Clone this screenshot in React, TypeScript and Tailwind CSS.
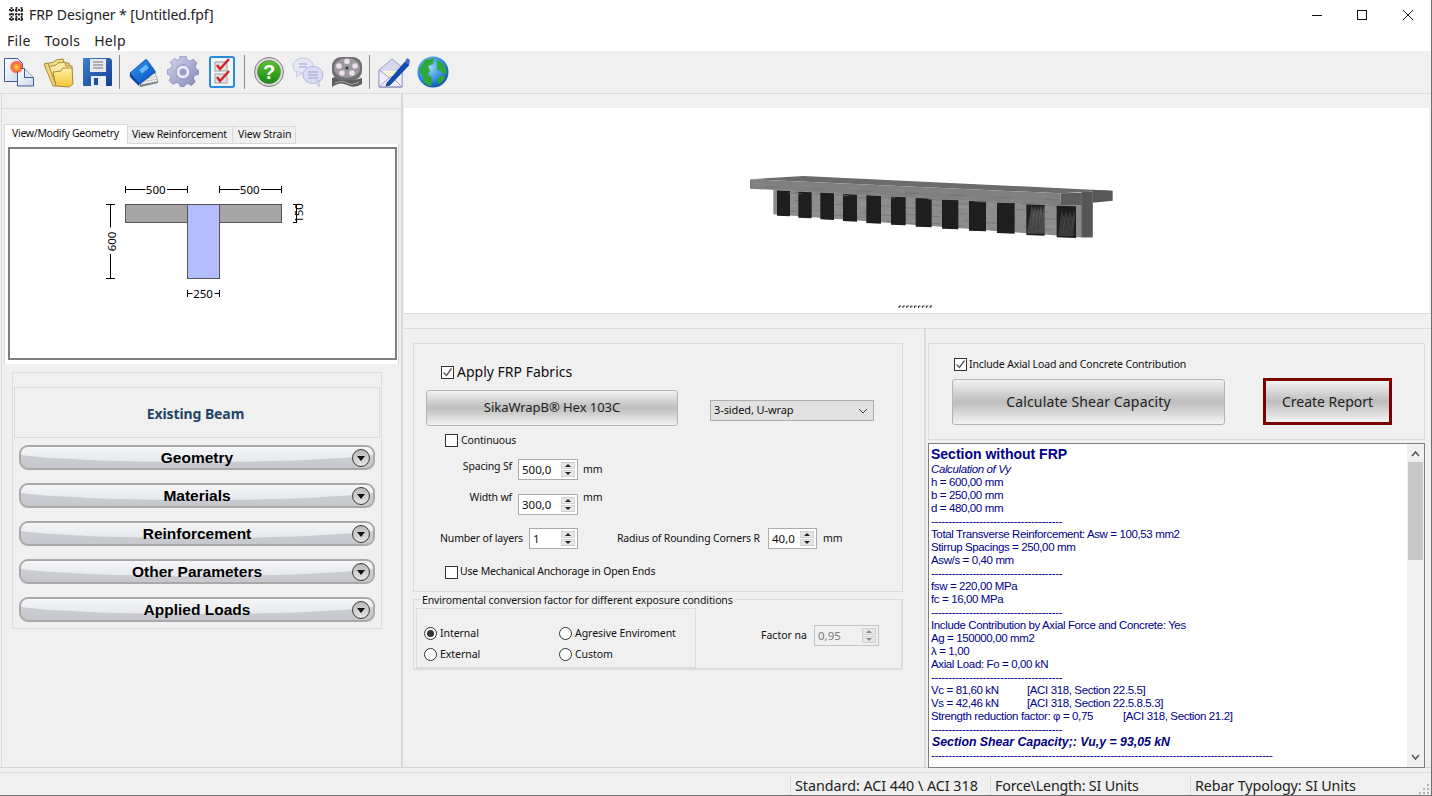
import React from 'react';

/* ── Toolbar icons ───────────────────────────────────────────────── */

function NewIcon() {
    return (
        <svg width="32" height="32" viewBox="0 0 32 32">
            <defs>
                <linearGradient id="pg" x1="0" y1="0" x2="1" y2="1">
                    <stop offset="0" stopColor="#ffffff" />
                    <stop offset="1" stopColor="#c9d8ee" />
                </linearGradient>
                <radialGradient id="burst">
                    <stop offset="0" stopColor="#ffe96a" />
                    <stop offset="0.45" stopColor="#ff8a1e" />
                    <stop offset="0.75" stopColor="#f43a2a" stopOpacity="0.75" />
                    <stop offset="1" stopColor="#ff3a2a" stopOpacity="0" />
                </radialGradient>
            </defs>
            <path d="M0.500 2.500h13l5 5v18H0.500z" fill="url(#pg)" stroke="#3e5c94" strokeWidth="1" />
            <path d="M13.500 12.500h7l9 9v8.500H13.500z" fill="url(#pg)" stroke="#3e5c94" strokeWidth="1" />
            <path d="M20.500 12.500v9h9" fill="#dfe8f6" stroke="#3e5c94" strokeWidth="1" />
            <circle cx="12.500" cy="11" r="7" fill="url(#burst)" />
        </svg>
    );
}

function FolderIcon() {
    return (
        <svg width="32" height="32" viewBox="0 0 32 32">
            <defs>
                <linearGradient id="fg" x1="0" y1="0" x2="0" y2="1">
                    <stop offset="0" stopColor="#fff3a8" />
                    <stop offset="1" stopColor="#f4c430" />
                </linearGradient>
            </defs>
            <path d="M2 8l9-2 2-2 7-1 1 4 5 0 1 6-20 4z" fill="#f3dc8a" stroke="#a8863a" strokeWidth="1" />
            <path d="M4 11l9-2 2-2 7-1 1 4 6 0v6l-22 5z" fill="#fbe9a6" stroke="#a8863a" strokeWidth="1" />
            <path d="M10 16l8-1 2-3 9 0 1 16-4 3-13-1z" fill="url(#fg)" stroke="#a8863a" strokeWidth="1" />
            <path d="M1 8l9 22 3 0-8-23z" fill="#f5d978" stroke="#a8863a" strokeWidth="1" />
        </svg>
    );
}

function SaveIcon() {
    return (
        <svg width="32" height="32" viewBox="0 0 32 32">
            <defs>
                <linearGradient id="sg" x1="0" y1="0" x2="1" y2="1">
                    <stop offset="0" stopColor="#3f7fd2" />
                    <stop offset="1" stopColor="#123f8c" />
                </linearGradient>
            </defs>
            <path d="M1 3q0-1 1-1h26l2 2v25q0 1-1 1H2q-1 0-1-1z" fill="url(#sg)" />
            <rect x="8" y="3" width="16" height="13" fill="#e9e9ec" />
            <path d="M11 6h10M11 9h10M11 12h10" stroke="#9a9aa4" strokeWidth="1.400" />
            <rect x="9" y="20" width="15" height="10" fill="#e8eef7" />
            <rect x="12" y="22" width="4" height="7" fill="#1d4f9f" />
        </svg>
    );
}

function BookIcon() {
    return (
        <svg width="32" height="32" viewBox="0 0 32 32">
            <defs>
                <linearGradient id="bg" x1="0" y1="0" x2="1" y2="1">
                    <stop offset="0" stopColor="#2f97f2" />
                    <stop offset="1" stopColor="#0a4cba" />
                </linearGradient>
            </defs>
            <path d="M12 31L30 27 30 24 12 28z" fill="#6f7a8a" />
            <path d="M12 29L30 25.500 27 17 14 22z" fill="#f0f0ea" stroke="#8e8e8e" strokeWidth="0.700" />
            <path d="M14 24L29 20M13 26L30 23" stroke="#b5b5ae" strokeWidth="0.800" />
            <path d="M2 17q-1 3 1 5l9 9q-2-2 0-3z" fill="#0a3f9c" />
            <path d="M2 17L17 4q1-1 2 0l8 11q1 2-1 2L12 28z" fill="url(#bg)" stroke="#0a3f9c" strokeWidth="0.700" />
            <path d="M11 14l7-5.500 3 3.500-7 5.500z" fill="#66b8f8" />
        </svg>
    );
}

function GearIcon() {
    return (
        <svg width="32" height="32" viewBox="0 0 32 32">
            <defs>
                <linearGradient id="gg" x1="0" y1="0" x2="1" y2="1">
                    <stop offset="0" stopColor="#d6d8f0" />
                    <stop offset="1" stopColor="#8487b8" />
                </linearGradient>
            </defs>
            <path
                d="M13 1h6l1 4 3 1.300 3.500-2 4 4-2 3.500L30 15l2 1v4l-4 1-1.300 3 2 3.500-4 4-3.500-2-3 1.200-1 1.800h-4l-1-3-3-1.200-3.500 2-4-4 2-3.500L2.800 21 0 20v-5l3.500-1L5 11 3 7.500l4-4 3.500 2 2-.9z"
                fill="url(#gg)"
                stroke="#7b7eae"
                strokeWidth="0.700"
                transform="translate(0.500 -1) scale(0.97)"
            />
            <circle cx="16" cy="16" r="7" fill="#e8e9f6" stroke="#8d90bd" />
            <circle cx="16" cy="16" r="3.500" fill="#9a9dc8" />
        </svg>
    );
}

function ChecklistIcon() {
    return (
        <svg width="32" height="32" viewBox="0 0 32 32">
            <rect x="4" y="1" width="24" height="30" rx="2" fill="#f2f4f7" stroke="#2a8bdc" strokeWidth="2" />
            <rect x="9" y="6" width="12" height="9" fill="#e3e3e3" stroke="#8e8e8e" strokeWidth="0.800" />
            <rect x="9" y="18" width="12" height="9" fill="#e3e3e3" stroke="#8e8e8e" strokeWidth="0.800" />
            <path d="M11 9l3 4 9-10" fill="none" stroke="#d3222a" strokeWidth="2.400" />
            <path d="M11 21l3 4 9-10" fill="none" stroke="#d3222a" strokeWidth="2.400" />
        </svg>
    );
}

function HelpIcon() {
    return (
        <svg width="32" height="32" viewBox="0 0 32 32">
            <defs>
                <linearGradient id="hg" x1="0" y1="0" x2="0" y2="1">
                    <stop offset="0" stopColor="#5cc22c" />
                    <stop offset="1" stopColor="#168d12" />
                </linearGradient>
            </defs>
            <circle cx="16" cy="16" r="14.500" fill="#dcdcdc" stroke="#7d7d7d" />
            <circle cx="16" cy="16" r="11.500" fill="url(#hg)" stroke="#4c6d42" strokeWidth="0.600" />
            <text x="16" y="23" textAnchor="middle" fontFamily="'Liberation Sans', sans-serif" fontWeight="700" fontSize="20" fill="#ffffff">
                ?
            </text>
        </svg>
    );
}

function ChatIcon() {
    return (
        <svg width="32" height="32" viewBox="0 0 32 32">
            <ellipse cx="11" cy="10" rx="10" ry="8" fill="#e6e8f8" stroke="#c4c8e6" />
            <path d="M5 15l-1 6 6-4z" fill="#e6e8f8" stroke="#c4c8e6" strokeWidth="0.800" />
            <ellipse cx="21" cy="19" rx="10" ry="8.500" fill="#d9dcf4" stroke="#b3b8de" />
            <path d="M24 26l3 5 0-7z" fill="#d9dcf4" stroke="#b3b8de" strokeWidth="0.800" />
            <path d="M7 8h8M7 11h8M16 16h10M16 19h10M16 22h10" stroke="#9a9fc4" strokeWidth="1" />
        </svg>
    );
}

function FilmIcon() {
    return (
        <svg width="32" height="32" viewBox="0 0 32 32">
            <path d="M1 22q8-3 14 0t16 0l0 6q-8 5-15 1T1 31z" fill="#5d5f5c" />
            <path d="M4 27q8-3 12 0t12-1" fill="none" stroke="#a6a8a2" strokeWidth="1" />
            <rect x="1" y="1" width="30" height="23" rx="9" fill="#6f6f73" />
            <ellipse cx="16" cy="12" rx="13" ry="10" fill="#9a9aa0" />
            <circle cx="16" cy="5.500" r="2.800" fill="#ecdfe8" />
            <circle cx="8" cy="10" r="2.800" fill="#ecdfe8" />
            <circle cx="24" cy="10" r="2.800" fill="#ecdfe8" />
            <circle cx="11" cy="17" r="2.800" fill="#ecdfe8" />
            <circle cx="21" cy="17" r="2.800" fill="#ecdfe8" />
            <circle cx="16" cy="12" r="1.500" fill="#35353a" />
        </svg>
    );
}

function MailIcon() {
    return (
        <svg width="32" height="32" viewBox="0 0 32 32">
            <path d="M1 14L14 3l10 8v20H1z" fill="#d6d8f0" stroke="#8d90c0" strokeWidth="0.800" />
            <path d="M5 15h16v8L13 25 5 20z" fill="#fbf4d8" />
            <path d="M1 31l12-11 11 11zM1 14l12 9 11-9v17H1z" fill="#eeeffa" stroke="#8d90c0" strokeWidth="0.800" />
            <path d="M9 27L27 6l4 3-19 20-4 1z" fill="#0d4fbd" stroke="#07296a" strokeWidth="0.700" />
            <path d="M27 6l2-4 3 2-1 5z" fill="#3a6fd0" />
        </svg>
    );
}

function GlobeIcon() {
    return (
        <svg width="32" height="32" viewBox="0 0 32 32">
            <defs>
                <radialGradient id="eg" cx="0.4" cy="0.35" r="0.75">
                    <stop offset="0" stopColor="#9ad6fb" />
                    <stop offset="0.6" stopColor="#2f88de" />
                    <stop offset="1" stopColor="#0b3f98" />
                </radialGradient>
            </defs>
            <circle cx="16" cy="16" r="15.500" fill="url(#eg)" />
            <path d="M2 13l6-9 9-2-1 6-5 2 2 5-2 3 4 4-1 8q-4 0-7-4l-1-6-3-3z" fill="#2fa83a" />
            <path d="M20 4l7 4 3 9-4 1-2-3-4-1zM21 22l6-3 1 3-5 6-3-2z" fill="#2fa83a" />
        </svg>
    );
}

/* ── Form bits ───────────────────────────────────────────────────── */

function Check({ checked, className }: { checked?: boolean; className?: string }) {
    return (
        <span className={`block w-[13px] h-[13px] shrink-0 bg-white border border-[#333333] ${className ?? ''}`}>
            {checked && (
                <svg width="11" height="11" viewBox="0 0 11 11" className="block">
                    <path d="M1.500 5.500l3 3 5-7" fill="none" stroke="#555555" strokeWidth="1.300" />
                </svg>
            )}
        </span>
    );
}

function Radio({ checked, label, className }: { checked?: boolean; label: string; className?: string }) {
    return (
        <div className={`flex items-center gap-[3px] h-[13px] ${className ?? ''}`}>
            <span className="flex items-center justify-center w-[13px] h-[13px] rounded-full bg-white border border-[#333333]">
                {checked && <span className="block w-[7px] h-[7px] rounded-full bg-[#333333]" />}
            </span>
            <span className="text-[10.500px] text-[#111111] tracking-[-0.05px]">{label}</span>
        </div>
    );
}

function Spin({ value, width, disabled }: { value: string; width: string; disabled?: boolean }) {
    return (
        <div className={`flex h-[21px] shrink-0 p-[2px] border ${width} ${disabled ? 'bg-[#f0f0f0] border-[#c4c4c4]' : 'bg-white border-[#ababab]'}`}>
            <span className={`flex-1 pl-[1px] text-[11.500px] leading-[15px] tracking-[0px] ${disabled ? 'text-[#7d7d7d]' : 'text-[#111111]'}`}>{value}</span>
            <div className="flex flex-col gap-px w-[14px]">
                <span className="flex-1 flex items-center justify-center bg-[#e6e6e6] border border-[#d2d2d2]">
                    <span className={`w-0 h-0 border-x-[3px] border-x-transparent border-b-[3px] ${disabled ? 'border-b-[#8c8c8c]' : 'border-b-[#222222]'}`} />
                </span>
                <span className="flex-1 flex items-center justify-center bg-[#e6e6e6] border border-[#d2d2d2]">
                    <span className={`w-0 h-0 border-x-[3px] border-x-transparent border-t-[3px] ${disabled ? 'border-t-[#8c8c8c]' : 'border-t-[#222222]'}`} />
                </span>
            </div>
        </div>
    );
}

function AccordionBar({ label }: { label: string }) {
    return (
        <div className="relative h-[25px] mx-[6px] rounded-[9px] border-[2px] border-[#a9a9a9] overflow-hidden bg-linear-to-b from-[#cfd1d6] to-[#c6c8cd]">
            <div className="absolute -left-[20px] -right-[20px] -top-[10px] h-[25px] rounded-b-[50%] bg-linear-to-b from-[#ffffff] to-[#e6e8ec]" />
            <div className="relative flex items-center justify-center h-full font-['Liberation_Sans',sans-serif] font-bold text-[15.500px] text-black">
                {label}
            </div>
            <div className="absolute right-[3px] top-[2px] flex items-center justify-center w-[18px] h-[18px] rounded-full border border-[#3b3b3b] bg-linear-to-b from-[#b9b9b9] to-[#e4e4e4]">
                <span className="w-0 h-0 border-x-[4px] border-x-transparent border-t-[5px] border-t-[#111111]" />
            </div>
        </div>
    );
}

/* ── Drawings ────────────────────────────────────────────────────── */

function TSection() {
    return (
        <svg width="385" height="208" viewBox="10 149 385 208" className="block" fontFamily="'Noto Sans', sans-serif" fontSize="11.500">
            <rect x="125.500" y="204.500" width="156" height="18" fill="#a6a6a6" stroke="#555555" />
            <rect x="187.500" y="204.500" width="32" height="74" fill="#b3bcff" stroke="#555555" />
            <g stroke="#000000" strokeWidth="1">
                <path d="M125.500 186v7M125.500 189.500h20M167 189.500h20.500M187.500 186v7" />
                <path d="M219.500 186v7M219.500 189.500h20M261 189.500h20.500M281.500 186v7" />
                <path d="M106 204.500h9M110.500 204.500v23M110.500 254v24M106 278.500h9" />
                <path d="M187.500 290v7M187.500 293.500h5M214.500 293.500h5M219.500 290v7" />
                <path d="M293 204.500h9M293 222.500h4M296.500 204v19" />
            </g>
            <text x="155.700" y="194" textAnchor="middle">500</text>
            <text x="249.700" y="194" textAnchor="middle">500</text>
            <text x="203" y="298" textAnchor="middle">250</text>
            <text transform="translate(116 241.500) rotate(-90)" textAnchor="middle">600</text>
            <text transform="translate(303 213) rotate(-90)" textAnchor="middle">150</text>
        </svg>
    );
}

const BARS = [
    [231, 270, 121, 197],
    [295, 335, 125, 203],
    [361, 402, 128, 208],
    [429, 471, 132, 213],
    [499, 543, 136, 219],
    [573, 617, 140, 224],
    [647, 695, 144, 230],
    [726, 775, 149, 236],
    [807, 858, 153, 242],
    [891, 944, 158, 249],
    [979, 1034, 163, 255],
    [1070, 1128, 167, 262],
];

function BeamView() {
    const grain = Array.from({ length: 70 }, (_, i) => {
        const x = 225 + ((i * 137) % 900);
        const t = (x - 220) / 925;
        const top = 122 + t * 42;
        const h = 72 + t * 24;
        const y = top + ((i * 29) % 100) / 100 * h;
        return <path key={i} d={`M${x} ${y}l${24 + (i % 5) * 7} ${2}`} stroke={i % 3 ? '#6e6e6e' : '#a2a2a2'} strokeWidth="2" />;
    });
    const flangeGrain = Array.from({ length: 26 }, (_, i) => {
        const x = 160 + i * 35;
        const y = 100 + (i % 4) * 8 + (x - 150) * 0.045;
        return <path key={i} d={`M${x} ${y}l${40} ${2}`} stroke={i % 2 ? '#6d6d6d' : '#8e8e8e'} strokeWidth="2" />;
    });
    const hatch = Array.from({ length: 18 }, (_, i) => (
        <path key={i} d={`M${982 + i * 3} ${250 + (i % 3)}L${996 + i * 2.200} ${170 + (i % 4) * 5}`} stroke="#8a8a8a" strokeWidth="1.200" />
    ));
    const hatch2 = Array.from({ length: 14 }, (_, i) => (
        <path key={i} d={`M${1076 + i * 3.200} ${258}L${1086 + i * 3} ${185 + (i % 4) * 6}`} stroke="#707070" strokeWidth="1.200" />
    ));
    return (
        <svg width="1025" height="205" viewBox="404 108 1025 205" className="block">
            <g transform="translate(700 150) scale(0.33333)">
                <polygon points="220,119 1145,160 1145,262 220,193" fill="#8c8c8c" />
                {grain}
                {BARS.map(([a, b, t, v], i) => (
                    <polygon key={i} points={`${a},${t} ${b},${t + 2} ${b},${v + 2} ${a},${v}`} fill="#1e1e1e" />
                ))}
                {hatch}
                {hatch2}
                <polygon points="1128,130 1178,126 1178,262 1128,262" fill="#8a8a8a" />
                <polygon points="1145,126 1178,126 1178,262 1145,262" fill="#565656" />
                <polygon points="150,88 310,78 1238,122 1082,130" fill="#6b6b6b" />
                <polygon points="150,88 1082,130 1082,166 150,116" fill="#808080" />
                {flangeGrain}
                <polygon points="1082,130 1145,128 1145,165 1082,165" fill="#5c5c5c" />
                <polygon points="1178,120 1238,122 1238,152 1178,158" fill="#585858" />
            </g>
            {[0, 1, 2, 3, 4, 5, 6, 7, 8].map((i) => (
                <path key={i} d={`M${899 + i * 3.900} 308v-2h2`} fill="none" stroke="#222222" />
            ))}
        </svg>
    );
}

/* ── Report text ─────────────────────────────────────────────────── */

const DASH = '-'.repeat(38);
const LONG_DASH = '-'.repeat(99);

function Line({ children }: { children?: React.ReactNode }) {
    return <div className="h-[13px] leading-[13px] whitespace-nowrap">{children}</div>;
}

function Ref({ left, right, width }: { left: string; right: string; width: string }) {
    return (
        <div className="flex h-[13px] leading-[13px] whitespace-nowrap">
            <span className={width}>{left}</span>
            <span>{right}</span>
        </div>
    );
}

/* ── Main Component ──────────────────────────────────────────────── */

export default function App() {
    return (
        <div className="flex flex-col w-[1432px] h-[796px] overflow-hidden bg-[#f0f0f0] border-r border-b border-[#6f6f6f] font-['Noto_Sans',sans-serif] text-[#111111]">
            {/* Title bar */}
            <div className="flex items-center h-[30px] shrink-0 bg-white pl-[8px] pb-[1px]">
                <svg width="17" height="15" viewBox="0 0 17 15" className="shrink-0">
                    <path d="M1 3h15M1 7.500h15M1 12h15M3.500 0v15M8.500 0v15M13.500 0v15" stroke="#2a2a2a" strokeWidth="1.800" strokeDasharray="2 1" />
                </svg>
                <span className="ml-[4px] text-[14px] tracking-[-0.08px] text-[#222222]">FRP Designer * [Untitled.fpf]</span>
                <div className="ml-auto flex items-center">
                    <svg width="12" height="12" viewBox="0 0 12 12" className="mr-[33px]"><path d="M1 6.500h10" stroke="#111111" /></svg>
                    <svg width="12" height="12" viewBox="0 0 12 12" className="mr-[34px]"><rect x="1.500" y="1.500" width="9" height="9" fill="none" stroke="#111111" /></svg>
                    <svg width="12" height="12" viewBox="0 0 12 12" className="mr-[17px]"><path d="M1 1l10 10M11 1L1 11" stroke="#111111" /></svg>
                </div>
            </div>

            {/* Menu */}
            <div className="flex items-center gap-[14px] h-[21px] shrink-0 bg-white pl-[7px] text-[14px] tracking-[0.3px] text-[#222222]">
                <span>File</span>
                <span>Tools</span>
                <span>Help</span>
            </div>

            {/* Toolbar */}
            <div className="flex items-center h-[43px] shrink-0 pl-[4px] border-b border-[#dcdcdc]">
                <div className="flex gap-[7px]">
                    <NewIcon />
                    <FolderIcon />
                    <SaveIcon />
                </div>
                <span className="w-px h-[34px] ml-[5px] mr-[8px] bg-[#8c8c8c]" />
                <div className="flex gap-[7px]">
                    <BookIcon />
                    <GearIcon />
                    <ChecklistIcon />
                </div>
                <span className="w-px h-[34px] ml-[6px] mr-[8px] bg-[#8c8c8c]" />
                <div className="flex gap-[7px]">
                    <HelpIcon />
                    <ChatIcon />
                    <FilmIcon />
                </div>
                <span className="w-px h-[34px] ml-[6px] mr-[8px] bg-[#8c8c8c]" />
                <div className="flex gap-[7px]">
                    <MailIcon />
                    <GlobeIcon />
                </div>
            </div>

            {/* Body */}
            <div className="flex flex-1 min-h-0 border-b border-[#d4d4d4]">
                {/* Left column */}
                <div className="flex flex-col w-[403px] shrink-0 pl-[1px] border-r-[2px] border-[#d8d8d8]">
                    <div className="flex flex-col h-full border-l border-[#dcdcdc]">
                        <div className="h-[14px] shrink-0" />
                        <div className="h-[16px] shrink-0 border-t border-[#dcdcdc]" />

                        {/* Tabs */}
                        <div className="flex items-end h-[20px] shrink-0 pl-[2px]">
                            <span className="flex items-center h-[20px] w-[124px] pl-[7px] pb-[2px] bg-white border border-b-0 border-[#d9d9d9] text-[10.500px] tracking-[-0.3px]">View/Modify Geometry</span>
                            <span className="flex items-center h-[18px] w-[105px] pl-[4px] border border-l-0 border-[#d9d9d9] text-[10.500px] tracking-[-0.2px]">View Reinforcement</span>
                            <span className="flex items-center h-[18px] w-[63px] pl-[5px] border border-l-0 border-[#d9d9d9] text-[10.500px] tracking-[-0.1px]">View Strain</span>
                        </div>
                        <div className="h-[220px] w-[395px] ml-[2px] shrink-0 bg-white pl-[3px] pt-[3px] border-x border-[#d9d9d9]">
                            <div className="w-[389px] h-[213px] border-[2px] border-[#7f7f7f] overflow-hidden">
                                <TSection />
                            </div>
                        </div>

                        {/* Existing Beam panel */}
                        <div className="w-[370px] h-[257px] ml-[10px] mt-[8px] pt-[14px] border border-[#dcdcdc]">
                            <div className="flex items-center justify-center h-[51px] mx-[1px] pr-[3px] pt-[1px] border border-[#dcdcdc] text-[14px] font-bold text-[#1f4467] tracking-[-0.1px]">
                                Existing Beam
                            </div>
                            <div className="flex flex-col gap-[13px] mt-[7px]">
                                <AccordionBar label="Geometry" />
                                <AccordionBar label="Materials" />
                                <AccordionBar label="Reinforcement" />
                                <AccordionBar label="Other Parameters" />
                                <AccordionBar label="Applied Loads" />
                            </div>
                        </div>
                    </div>
                </div>

                {/* Right column */}
                <div className="flex flex-col flex-1 min-w-0 pl-[1px]">
                    <div className="h-[14px] shrink-0" />
                    <div className="w-[1025px] h-[205px] shrink-0 bg-white">
                        <BeamView />
                    </div>
                    <div className="h-[15px] shrink-0 border-t border-[#dcdcdc]" />

                    <div className="flex flex-1 min-h-0 border-t border-[#dcdcdc]">
                        {/* FRP settings */}
                        <div className="w-[522px] shrink-0 border-r-[2px] border-[#dcdcdc] pl-[9px] pt-[14px]">
                            <div className="w-[490px] h-[249px] border border-[#dcdcdc] text-[10.500px] tracking-[-0.17px] whitespace-nowrap">
                                <div className="flex items-center gap-[3px] ml-[27px] mt-[21px] h-[14px]">
                                    <Check checked />
                                    <span className="text-[14px] tracking-[0px] -mt-[2px]">Apply FRP Fabrics</span>
                                </div>
                                <div className="flex items-start mt-[11px] ml-[12px]">
                                    <div className="flex items-center justify-center w-[252px] h-[36px] rounded-[3px] border border-[#b4b4b4] bg-linear-to-b from-[#f3f3f3] via-[#bdbdbd] to-[#f3f3f3] text-[13px] tracking-[-0.05px] text-[#222222]">
                                        SikaWrapB® Hex 103C
                                    </div>
                                    <div className="flex items-center justify-between w-[164px] h-[21px] ml-[32px] mt-[10px] pl-[3px] pr-[5px] bg-[#e1e1e1] border border-[#adadad] text-[11px] tracking-[-0.1px]">
                                        <span>3-sided, U-wrap</span>
                                        <svg width="10" height="6" viewBox="0 0 10 6"><path d="M1 1l4 4 4-4" fill="none" stroke="#444444" /></svg>
                                    </div>
                                </div>
                                <div className="flex items-center gap-[3px] ml-[31px] mt-[8px] h-[13px]">
                                    <Check />
                                    <span>Continuous</span>
                                </div>
                                <div className="flex items-start mt-[12px]">
                                    <span className="w-[98px] text-right leading-[14px]">Spacing Sf</span>
                                    <div className="ml-[6px]"><Spin value="500,0" width="w-[60px]" /></div>
                                    <span className="ml-[5px] mt-[3px]">mm</span>
                                </div>
                                <div className="flex items-start mt-[14px]">
                                    <span className="w-[98px] text-right leading-[14px] mt-[-4px]">Width wf</span>
                                    <div className="ml-[6px]"><Spin value="300,0" width="w-[60px]" /></div>
                                    <span className="ml-[5px] mt-[-4px]">mm</span>
                                </div>
                                <div className="flex items-center mt-[13px]">
                                    <span className="w-[109px] pl-[26px]">Number of layers</span>
                                    <div className="ml-[6px]"><Spin value="1" width="w-[49px]" /></div>
                                    <span className="ml-[39px] w-[145px]">Radius of Rounding Corners R</span>
                                    <div className="ml-[6px]"><Spin value="40,0" width="w-[49px]" /></div>
                                    <span className="ml-[6px]">mm</span>
                                </div>
                                <div className="flex items-center gap-[2px] ml-[31px] mt-[17px] h-[13px]">
                                    <Check />
                                    <span className="-mt-[2px]">Use Mechanical Anchorage in Open Ends</span>
                                </div>
                            </div>

                            {/* Environmental factor */}
                            <div className="relative flex w-[490px] h-[71px] mt-[7px] border-[2px] border-[#dcdcdc] border-t border-l">
                                <span className="absolute left-[7px] -top-[7px] px-[1px] bg-[#f0f0f0] text-[10.500px] leading-[14px] whitespace-nowrap tracking-[-0.13px]">
                                    Enviromental conversion factor for different exposure conditions
                                </span>
                                <div className="grid grid-cols-[141px_auto] content-start gap-y-[8px] w-[280px] h-[60px] mt-[8px] ml-[2px] pt-[18px] pl-[7px] border border-[#dcdcdc]">
                                    <Radio checked label="Internal" />
                                    <Radio label="Agresive Enviroment" className="ml-[-6px]" />
                                    <Radio label="External" />
                                    <Radio label="Custom" className="ml-[-6px]" />
                                </div>
                                <div className="flex items-center h-[21px] mt-[25px] ml-[65px]">
                                    <span className="w-[46px] text-[10.500px] whitespace-nowrap">Factor na</span>
                                    <div className="ml-[7px]"><Spin value="0,95" width="w-[65px]" disabled /></div>
                                </div>
                            </div>
                        </div>

                        {/* Results */}
                        <div className="flex-1 min-w-0 pl-[2px] pt-[14px]">
                            <div className="w-[497px] h-[97px] border border-[#dcdcdc]">
                                <div className="flex items-center gap-[2px] ml-[25px] mt-[14px] h-[13px]">
                                    <Check checked />
                                    <span className="text-[10.500px] tracking-[-0.15px]">Include Axial Load and Concrete Contribution</span>
                                </div>
                                <div className="flex items-start mt-[8px] ml-[23px]">
                                    <div className="flex items-center justify-center w-[273px] h-[46px] pb-[2px] rounded-[3px] border border-[#b4b4b4] bg-linear-to-b from-[#f3f3f3] via-[#bdbdbd] to-[#f3f3f3] text-[14px] tracking-[0.15px] text-[#222222]">
                                        Calculate Shear Capacity
                                    </div>
                                    <div className="flex items-center justify-center w-[129px] h-[47px] -mt-px ml-[38px] border-[3px] border-[#7b0000] bg-linear-to-b from-[#f3f3f3] via-[#bdbdbd] to-[#f3f3f3] text-[14px] text-[#222222]">
                                        Create Report
                                    </div>
                                </div>
                            </div>

                            {/* Report */}
                            <div className="flex w-[497px] h-[325px] mt-[3px] bg-white border border-[#7f7f7f]">
                                <div className="flex-1 min-w-0 pl-[2px] pt-[3px] font-['Liberation_Sans',sans-serif] text-[11.500px] tracking-[-0.38px] text-[#00008b] overflow-hidden">
                                    <div className="h-[15px] leading-[15px] font-bold text-[14px] tracking-[0px]">Section without FRP</div>
                                    <div className="h-[14px] leading-[15px] italic">Calculation of Vy</div>
                                    <Line>h = 600,00 mm</Line>
                                    <Line>b = 250,00 mm</Line>
                                    <Line>d = 480,00 mm</Line>
                                    <Line>{DASH}</Line>
                                    <Line>Total Transverse Reinforcement: Asw = 100,53 mm2</Line>
                                    <Line>Stirrup Spacings = 250,00 mm</Line>
                                    <Line>Asw/s = 0,40 mm</Line>
                                    <Line>{DASH}</Line>
                                    <Line>fsw = 220,00 MPa</Line>
                                    <Line>fc = 16,00 MPa</Line>
                                    <Line>{DASH}</Line>
                                    <Line>Include Contribution by Axial Force and Concrete: Yes</Line>
                                    <Line>Ag = 150000,00 mm2</Line>
                                    <Line>λ = 1,00</Line>
                                    <Line>Axial Load: Fo = 0,00 kN</Line>
                                    <Line>{DASH}</Line>
                                    <Ref left="Vc = 81,60 kN" right="[ACI 318, Section 22.5.5]" width="w-[96px]" />
                                    <Ref left="Vs = 42,46 kN" right="[ACI 318, Section 22.5.8.5.3]" width="w-[96px]" />
                                    <Ref left="Strength reduction factor: φ = 0,75" right="[ACI 318, Section 21.2]" width="w-[192px]" />
                                    <Line>{DASH}</Line>
                                    <div className="h-[13px] leading-[13px] pl-[1px] font-bold italic text-[12.300px] tracking-[0px] text-[#000080] whitespace-nowrap">
                                        Section Shear Capacity;: Vu,y = 93,05 kN
                                    </div>
                                    <Line>{LONG_DASH}</Line>
                                </div>
                                {/* Scrollbar */}
                                <div className="flex flex-col items-center w-[17px] shrink-0 bg-[#f0f0f0]">
                                    <svg width="17" height="18" viewBox="0 0 17 18" className="shrink-0"><path d="M5 12l3.500-4 3.500 4" fill="none" stroke="#555555" strokeWidth="1.500" /></svg>
                                    <div className="w-[15px] h-[98px] bg-[#c8c8c8]" />
                                    <div className="flex-1" />
                                    <svg width="17" height="18" viewBox="0 0 17 18" className="shrink-0"><path d="M5 6l3.500 4 3.500-4" fill="none" stroke="#555555" strokeWidth="1.500" /></svg>
                                </div>
                            </div>
                        </div>
                    </div>
                </div>
            </div>

            {/* Status bar */}
            <div className="h-[4px] shrink-0" />
            <div className="relative flex items-end h-[23px] shrink-0 border-t border-[#dcdcdc] text-[14.300px] text-[#222222]">
                <div className="w-[790px]" />
                <div className="flex items-center w-[200px] h-[20px] pl-[4px] pt-[1px] tracking-[-0.02px] border-l border-[#dcdcdc]">Standard: ACI 440 \ ACI 318</div>
                <div className="flex items-center w-[200px] h-[20px] pl-[4px] pt-[1px] tracking-[-0.2px] border-l border-[#dcdcdc]">Force\Length: SI Units</div>
                <div className="flex items-center flex-1 h-[20px] pl-[4px] pt-[1px] tracking-[-0.1px] border-l border-[#dcdcdc]">Rebar Typology: SI Units</div>
                <svg width="12" height="12" viewBox="0 0 12 12" className="absolute right-[1px] bottom-[1px]">
                    <path d="M9 2h2v2H9zM5 6h2v2H5zM9 6h2v2H9zM1 10h2v2H1zM5 10h2v2H5zM9 10h2v2H9z" fill="#b5b5b5" />
                </svg>
            </div>
        </div>
    );
}
